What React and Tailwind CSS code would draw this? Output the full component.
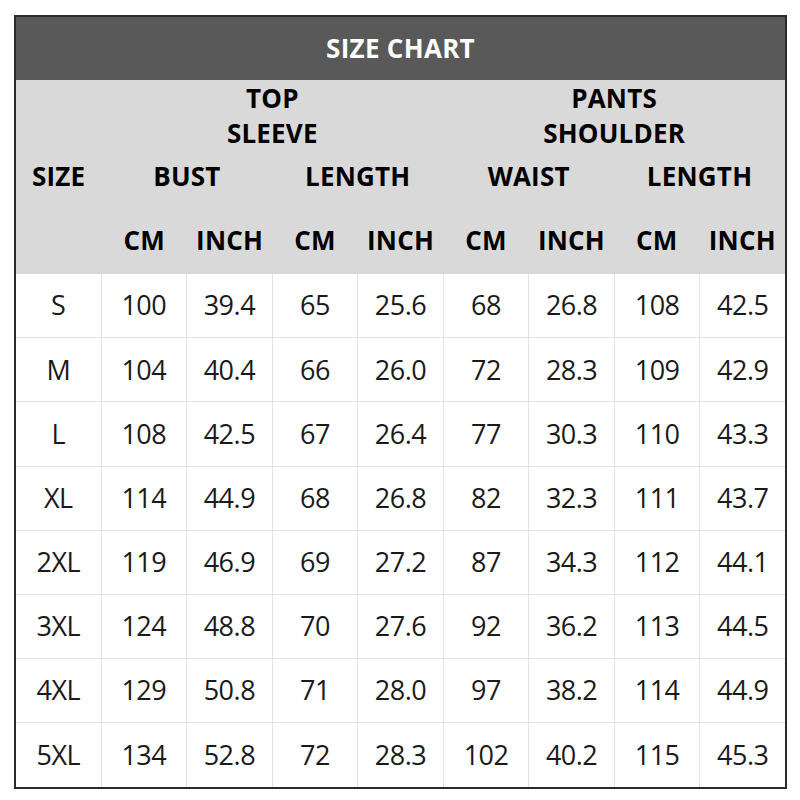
import React from "react";

const rows = [
  ["S", "100", "39.4", "65", "25.6", "68", "26.8", "108", "42.5"],
  ["M", "104", "40.4", "66", "26.0", "72", "28.3", "109", "42.9"],
  ["L", "108", "42.5", "67", "26.4", "77", "30.3", "110", "43.3"],
  ["XL", "114", "44.9", "68", "26.8", "82", "32.3", "111", "43.7"],
  ["2XL", "119", "46.9", "69", "27.2", "87", "34.3", "112", "44.1"],
  ["3XL", "124", "48.8", "70", "27.6", "92", "36.2", "113", "44.5"],
  ["4XL", "129", "50.8", "71", "28.0", "97", "38.2", "114", "44.9"],
  ["5XL", "134", "52.8", "72", "28.3", "102", "40.2", "115", "45.3"],
];

const units = ["CM", "INCH", "CM", "INCH", "CM", "INCH", "CM", "INCH"];

export default function App() {
  return (
    <div
      className="w-[800px] h-[800px] bg-white pl-[14px] pt-[15px]"
      style={{ fontFamily: '"Open Sans", "Noto Sans", sans-serif' }}
    >
      <div className="w-[773px] border-2 border-[#2a2a2a] bg-white">
        {/* Title */}
        <div className="h-[63px] bg-[#595959] flex items-center justify-center text-white font-bold text-[26px] tracking-[0.3px]">
          SIZE CHART
        </div>

        {/* Header */}
        <div className="bg-[#d9d9d9] h-[194px] grid grid-cols-9 grid-rows-[72px_48px_74px] text-black font-bold text-[26px] tracking-[0.2px]">
          <div className="col-start-2 col-span-4 flex flex-col items-center leading-[35px] pt-[1px]">
            <span>TOP</span>
            <span>SLEEVE</span>
          </div>
          <div className="col-span-4 flex flex-col items-center leading-[35px] pt-[1px]">
            <span>PANTS</span>
            <span>SHOULDER</span>
          </div>

          <div className="flex items-center justify-center">SIZE</div>
          <div className="col-span-2 flex items-center justify-center">BUST</div>
          <div className="col-span-2 flex items-center justify-center">LENGTH</div>
          <div className="col-span-2 flex items-center justify-center">WAIST</div>
          <div className="col-span-2 flex items-center justify-center">LENGTH</div>

          <div />
          {units.map((u, i) => (
            <div key={i} className="flex items-center justify-center pt-[6px]">
              {u}
            </div>
          ))}
        </div>

        {/* Body */}
        <div className="grid grid-cols-9 gap-px bg-[#e3e3e3]">
          {rows.map((r, ri) =>
            r.map((c, ci) => (
              <div
                key={ri + "-" + ci}
                className="bg-white h-[63.2px] flex items-center justify-center text-[27px] text-[#1a1a1a] tracking-[-0.5px]"
              >
                {c}
              </div>
            ))
          )}
        </div>
      </div>
    </div>
  );
}
